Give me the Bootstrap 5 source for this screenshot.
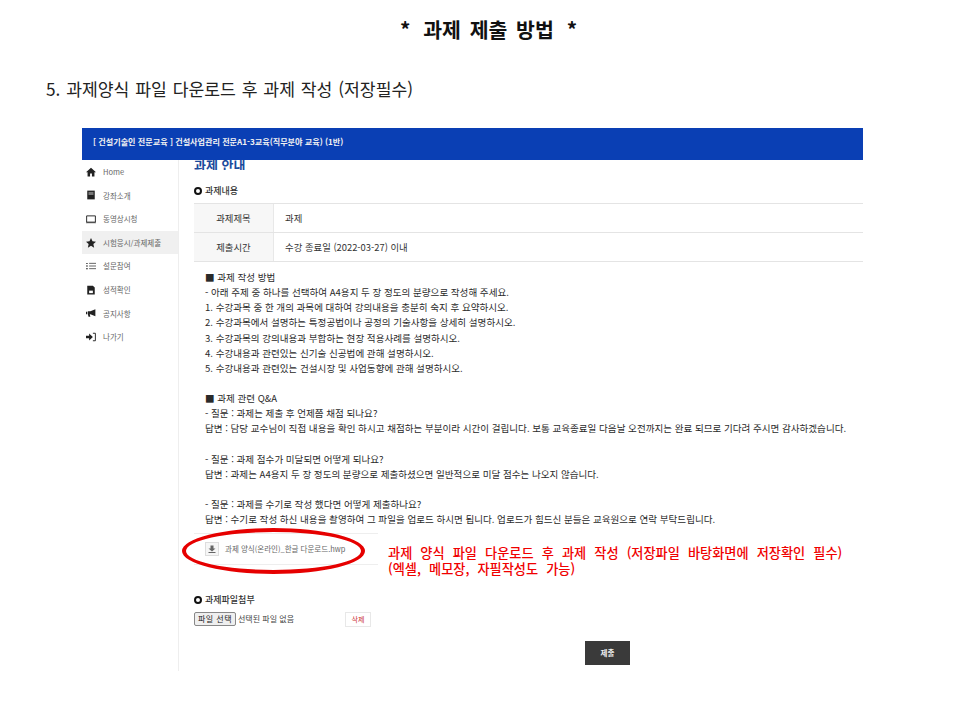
<!DOCTYPE html>
<html lang="ko">

<head>
    <meta charset="UTF-8">
    <meta name="viewport" content="width=device-width, initial-scale=1.0">
    <title>과제 제출 방법</title>
    <link rel="stylesheet" href="https://cdn.jsdelivr.net/npm/bootstrap@5.3.0/dist/css/bootstrap.min.css">
    <style>
        body { font-family: "Noto Sans CJK KR", "Liberation Sans", sans-serif; background: #fff; color: #000; width: 960px; height: 720px; overflow: hidden; }
        .slide-title { height: 60px; padding-top: 14px; padding-left: 17px; font-size: 20.500px; line-height: 30px; font-weight: 700; word-spacing: 3px; color: #111; }
        .slide-step { height: 68px; padding-top: 17px; padding-left: 46px; font-size: 17.200px; line-height: 24px; word-spacing: 1px; color: #222; }
        .shot { position: relative; width: 781px; height: 543px; margin-left: 82px; overflow: hidden; color: #333; }
        .shot-head { height: 32px; background: #0a3fb4; color: #f2f2f2; font-size: 8.100px; font-weight: 700; line-height: 27px; padding-left: 11px; }
        .shot-body { height: 511px; }
        .side-menu { width: 97px; border-right: 1px solid #eee; flex: none; }
        .side-item { height: 23.600px; font-size: 7.500px; line-height: 23.600px; color: #666; padding-left: 4px; gap: 7px; white-space: nowrap; }
        .side-item svg { width: 10px; height: 10px; flex: none; }
        .side-item.on { background: #f0f0f0; }
        .main-col { padding-left: 15px; width: 684px; }
        .page-head { height: 10px; overflow: hidden; font-size: 13px; font-weight: 700; color: #1a4a9c; line-height: 10px; }
        .sect-title { font-size: 9px; line-height: 14px; font-weight: 500; color: #333; gap: 3px; margin-top: 13px; height: 19px; }
        .sect-top { margin-top: 11px; height: 22px; padding-bottom: 3px; }
        .ring { width: 8px; height: 8px; border: 2px solid #111; border-radius: 50%; flex: none; }
        .info-row { height: 29.500px; border-bottom: 1px solid #e4e4e4; font-size: 9.400px; line-height: 28.500px; }
        .info-row:first-child { border-top: 1px solid #e4e4e4; }
        .info-th { width: 80px; background: #f7f7f7; border-right: 1px solid #e8e8e8; text-align: center; }
        .info-td { padding-left: 11px; }
        .guide { padding: 8px 0 0 11px; font-size: 9.560px; line-height: 15.130px; color: #2a2a2a; white-space: nowrap; height: 271px; }
        .guide p { margin: 0; min-height: 15.130px; }
        .file-row { width: 184px; height: 32px; border-top: 1px solid #eee; border-bottom: 1px solid #eee; padding-left: 11px; gap: 6px; font-size: 7.500px; color: #666; white-space: nowrap; }
        .file-ico { width: 14px; height: 14px; border: 1px solid #ddd; background: #f6f6f6; flex: none; }
        .attach-title { margin-top: 25px; }
        .attach-row { height: 16px; margin-top: 2px; font-size: 8px; color: #444; }
        .pick-btn { width: 42px; height: 14px; background: #efefef; border: 1px solid #888; border-radius: 2px; font-size: 8px; line-height: 12px; text-align: center; color: #222; letter-spacing: .5px; margin-right: 2px; }
        .del-btn { width: 26px; height: 15px; margin-left: 51px; border: 1px solid #e8e8e8; font-size: 7px; line-height: 13px; text-align: center; color: #c33; }
        .send-btn { width: 45px; height: 24px; background: #3a3a3a; color: #f0f0f0; font-size: 7.500px; font-weight: 700; line-height: 24px; text-align: center; margin: 14px 0 0 391px; }
        /* marks drawn over the screenshot */
        .red-ring { position: absolute; left: 100px; top: 400px; width: 183px; height: 46px; border: 4px solid #e60000; border-radius: 50%; }
        .red-note { position: absolute; left: 306px; top: 417px; font-size: 13.200px; line-height: 16px; font-weight: 500; color: #f00000; word-spacing: 4.400px; white-space: nowrap; }
    </style>
</head>

<body>
    <div class="slide-title text-center">* &thinsp;과제 제출 방법 &thinsp;*</div>
    <div class="slide-step">5. 과제양식 파일 다운로드 후 과제 작성 (저장필수)</div>

    <div class="shot">
        <div class="shot-head">[ 건설기술인 전문교육 ] 건설사업관리 전문A1-3교육(직무분야 교육) (1반)</div>
        <div class="shot-body d-flex">
            <!-- Side menu -->
            <div class="side-menu">
                <div class="side-item d-flex align-items-center">
                    <svg viewBox="0 0 16 16"><path d="M8 1 0 8.500h2.500V15h4v-4.500h3V15h4V8.500H16z" fill="#222"/></svg>Home</div>
                <div class="side-item d-flex align-items-center">
                    <svg viewBox="0 0 16 16"><path d="M2 1h12v14H2z" fill="#222"/><path d="M4 3h8v5H4z" fill="#777"/></svg>강좌소개</div>
                <div class="side-item d-flex align-items-center">
                    <svg viewBox="0 0 16 16"><path d="M1 3h14v10H1z" fill="none" stroke="#222" stroke-width="1.500"/><path d="M0 14h16" stroke="#222"/></svg>동영상시청</div>
                <div class="side-item on d-flex align-items-center">
                    <svg viewBox="0 0 16 16"><path d="m8 0 2.400 5.300 5.600.6-4.200 3.800 1.200 5.700L8 12.500l-5 2.900 1.200-5.700L0 5.900l5.600-.6z" fill="#222"/></svg>시험응시/과제제출</div>
                <div class="side-item d-flex align-items-center">
                    <svg viewBox="0 0 16 16"><path d="M0 3h3v1.500H0zM0 7.250h3v1.500H0zM0 11.500h3V13H0z" fill="#333"/><path d="M5 3.750h11M5 8h11M5 12.250h11" stroke="#333" stroke-width="1.200"/></svg>설문참여</div>
                <div class="side-item d-flex align-items-center">
                    <svg viewBox="0 0 16 16"><path d="M2 1h9l3 3v11H2z" fill="#222"/><path d="M5 9h6v4H5z" fill="#fff"/></svg>성적확인</div>
                <div class="side-item d-flex align-items-center">
                    <svg viewBox="0 0 16 16"><path d="M0 6h2v4H0zM3 5h4l8-3v11L7 10H6l1 4H4l-1-4z" fill="#222"/></svg>공지사항</div>
                <div class="side-item d-flex align-items-center">
                    <svg viewBox="0 0 16 16"><path d="M0 6h5V2.500L11 8l-6 5.500V10H0z" fill="#222"/><path d="M11 2h4v12h-4" fill="none" stroke="#222" stroke-width="1.500"/></svg>나가기</div>
            </div>

            <!-- Assignment -->
            <div class="main-col">
                <div class="page-head">과제 안내</div>
                <div class="sect-title sect-top d-flex align-items-center"><span class="ring"></span>과제내용</div>
                <div>
                    <div class="info-row d-flex"><div class="info-th">과제제목</div><div class="info-td">과제</div></div>
                    <div class="info-row d-flex"><div class="info-th">제출시간</div><div class="info-td">수강 종료일 (2022-03-27) 이내</div></div>
                </div>
                <div class="guide">
                    <p>■ 과제 작성 방법</p>
                    <p>- 아래 주제 중 하나를 선택하여 A4용지 두 장 정도의 분량으로 작성해 주세요.</p>
                    <p>1. 수강과목 중 한 개의 과목에 대하여 강의내용을 충분히 숙지 후 요약하시오.</p>
                    <p>2. 수강과목에서 설명하는 특정공법이나 공정의 기술사항을 상세히 설명하시오.</p>
                    <p>3. 수강과목의 강의내용과 부합하는 현장 적용사례를 설명하시오.</p>
                    <p>4. 수강내용과 관련있는 신기술 신공법에 관해 설명하시오.</p>
                    <p>5. 수강내용과 관련있는 건설시장 및 사업동향에 관해 설명하시오.</p>
                    <p></p>
                    <p>■ 과제 관련 Q&amp;A</p>
                    <p>- 질문 : 과제는 제출 후 언제쯤 채점 되나요?</p>
                    <p>답변 : 담당 교수님이 직접 내용을 확인 하시고 채점하는 부분이라 시간이 걸립니다. 보통 교육종료일 다음날 오전까지는 완료 되므로 기다려 주시면 감사하겠습니다.</p>
                    <p></p>
                    <p>- 질문 : 과제 점수가 미달되면 어떻게 되나요?</p>
                    <p>답변 : 과제는 A4용지 두 장 정도의 분량으로 제출하셨으면 일반적으로 미달 점수는 나오지 않습니다.</p>
                    <p></p>
                    <p>- 질문 : 과제를 수기로 작성 했다면 어떻게 제출하나요?</p>
                    <p>답변 : 수기로 작성 하신 내용을 촬영하여 그 파일을 업로드 하시면 됩니다. 업로드가 힘드신 분들은 교육원으로 연락 부탁드립니다.</p>
                </div>
                <div class="file-row d-flex align-items-center">
                    <span class="file-ico d-flex align-items-center justify-content-center">
                        <svg width="8" height="8" viewBox="0 0 16 16"><path d="M5 1h6v6h4l-7 6-7-6h4zM1 14h14v2H1z" fill="#666"/></svg>
                    </span>과제 양식(온라인)_한글 다운로드.hwp</div>
                <div class="sect-title attach-title d-flex align-items-center"><span class="ring"></span>과제파일첨부</div>
                <div class="attach-row d-flex align-items-center">
                    <div class="pick-btn">파일 선택</div>선택된 파일 없음<div class="del-btn">삭제</div>
                </div>
                <div class="send-btn">제출</div>
            </div>
        </div>

        <div class="red-ring"></div>
        <div class="red-note">과제 양식 파일 다운로드 후 과제 작성 (저장파일 바탕화면에 저장확인 필수)<br>(엑셀, 메모장, 자필작성도 가능)</div>
    </div>

    <script src="https://cdn.jsdelivr.net/npm/bootstrap@5.3.0/dist/js/bootstrap.bundle.min.js"></script>
</body>

</html>
